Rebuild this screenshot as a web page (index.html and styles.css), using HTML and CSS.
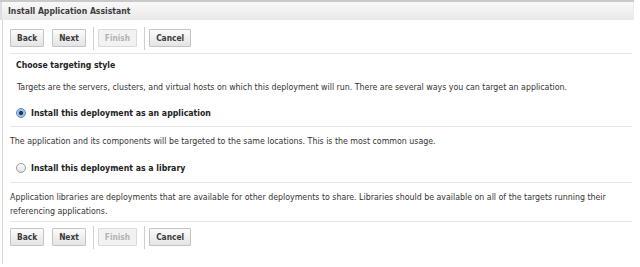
FILE: index.html
```html
<!DOCTYPE html>
<html lang="en">
<head>
    <meta charset="UTF-8">
    <title>Install Application Assistant</title>
    <link rel="stylesheet" href="styles.css">
</head>
<body>
    <div class="assistant">
        <div class="title-bar">Install Application Assistant</div>
        <div class="content">
            <div class="button-bar">
                <button class="btn">Back</button>
                <button class="btn">Next</button>
                <span class="divider"></span>
                <button class="btn" disabled>Finish</button>
                <span class="divider"></span>
                <button class="btn">Cancel</button>
            </div>

            <div class="section">
                <h2>Choose targeting style</h2>
                <p class="intro">Targets are the servers, clusters, and virtual hosts on which this deployment will run. There are several ways you can target an application.</p>
                <label class="option">
                    <span class="radio checked"></span>
                    Install this deployment as an application
                </label>
            </div>
            <p class="option-desc">The application and its components will be targeted to the same locations. This is the most common usage.</p>

            <div class="section">
                <label class="option second">
                    <span class="radio"></span>
                    Install this deployment as a library
                </label>
            </div>
            <p class="option-desc last">Application libraries are deployments that are available for other deployments to share. Libraries should be available on all of the targets running their referencing applications.</p>

            <div class="button-bar bottom">
                <button class="btn">Back</button>
                <button class="btn">Next</button>
                <span class="divider"></span>
                <button class="btn" disabled>Finish</button>
                <span class="divider"></span>
                <button class="btn">Cancel</button>
            </div>
        </div>
    </div>
</body>
</html>
```

FILE: styles.css
```css
body {
    margin: 0;
    background: #fff;
    font-family: 'DejaVu Sans Condensed', 'DejaVu Sans', Verdana, sans-serif;
    font-size: 8.75px;
    color: #333;
}

.assistant {
    width: 634px;
    border-top: 2px solid #c9c9c9;
}

.title-bar {
    height: 18px;
    line-height: 18px;
    padding-left: 6px;
    font-weight: bold;
    font-size: 8.6px;
    color: #3d3d3d;
    background: linear-gradient(#f9f9f9, #e8e8e8);
    border-right: 1px solid #ececec;
    border-left: 2px solid #dedede;
}

.content {
    border-left: 1px solid #d6d6d6;
    margin-left: 2px;
    padding: 0 2px 12px 7px;
}

.button-bar {
    display: flex;
    align-items: center;
    gap: 8px;
    height: 18px;
    padding: 9px 0 6px 0;
    border-bottom: 1px solid #e6e6e6;
}

.button-bar.bottom {
    border-bottom: none;
    padding-top: 6px;
}

.btn {
    height: 18px;
    padding: 0 6px;
    font-family: inherit;
    font-size: 8.3px;
    font-weight: bold;
    color: #3a3a3a;
    background: linear-gradient(#fbfbfb, #e4e4e4);
    border: 1px solid #c4c4c4;
    border-radius: 1px;
}

.btn:disabled {
    color: #b4b4b4;
    background: #f2f2f2;
    border-color: #dadada;
}

.divider {
    width: 1px;
    height: 23px;
    margin: 0 -4px 0 -1px;
    background: #cfcfcf;
}

.section {
    padding-left: 6px;
    border-bottom: 1px solid #e6e6e6;
}

h2 {
    margin: 0;
    padding-top: 5px;
    line-height: 12px;
    font-size: 8.6px;
    font-weight: bold;
    color: #222;
}

.intro {
    margin: 10px 0 0 1px;
    line-height: 12px;
}

.option {
    display: flex;
    align-items: center;
    gap: 5px;
    height: 27px;
    margin-top: 6px;
    font-weight: bold;
    font-size: 8.7px;
    color: #222;
}

.option.second {
    height: 29px;
    margin-top: 0;
}

.radio {
    width: 8px;
    height: 8px;
    border-radius: 50%;
    border: 1px solid #9a9a9a;
    background: linear-gradient(#fdfdfd, #e2e2e2);
}

.radio.checked {
    border-color: #5d87b8;
    background: radial-gradient(circle, #1f3b63 0 1.8px, #8db6e4 2.4px, #d2e4f6 100%);
}

.option-desc {
    margin: 0;
    padding: 8px 0 6px;
    line-height: 12px;
}

.option-desc.last {
    padding: 7px 0 3px;
    line-height: 14px;
    border-bottom: 1px solid #e6e6e6;
}
```
